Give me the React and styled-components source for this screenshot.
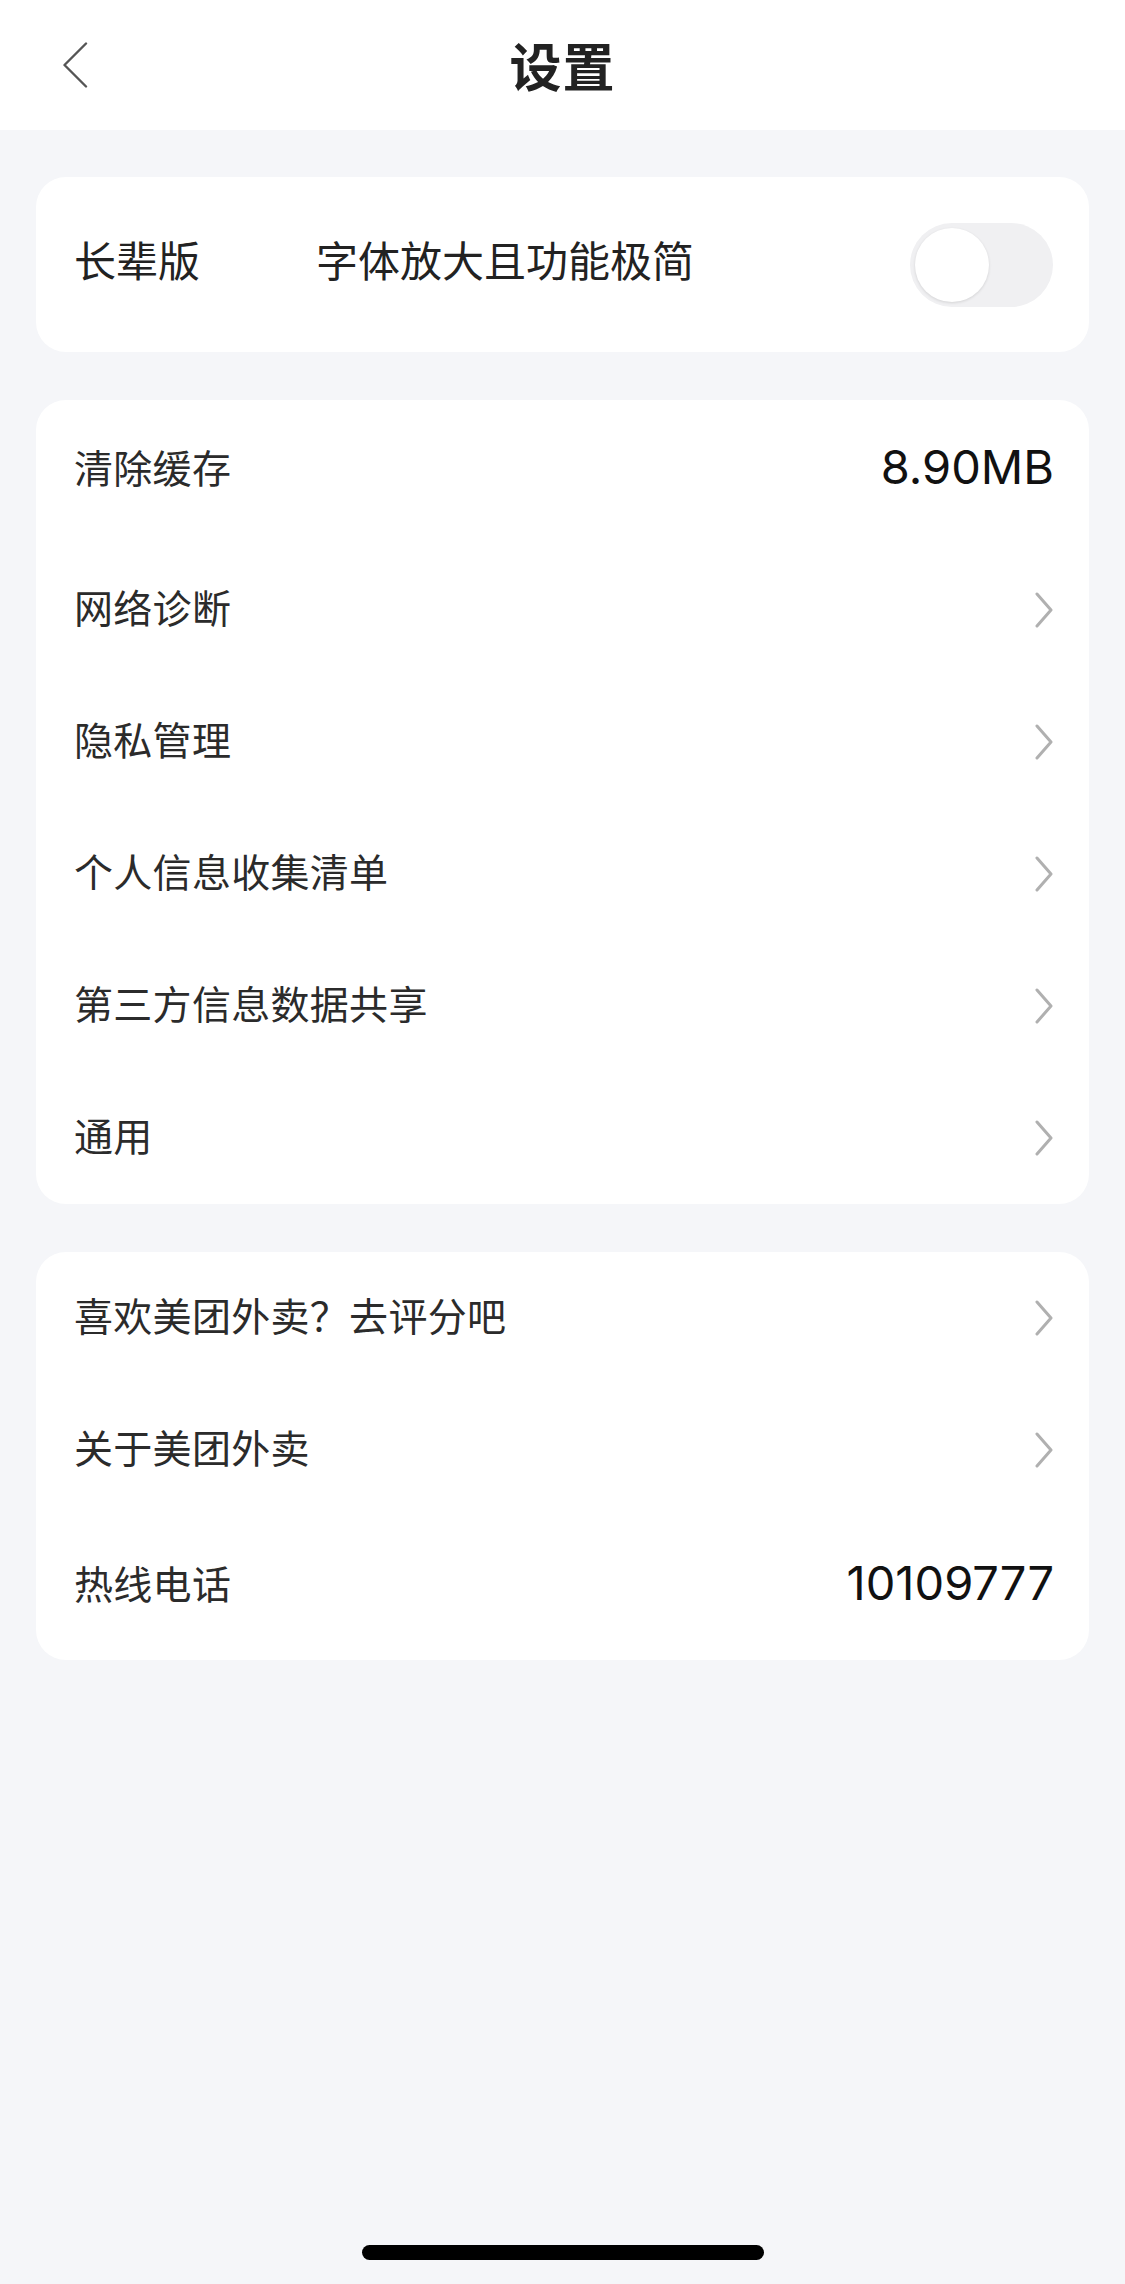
import React from "react";
import styled, { createGlobalStyle } from "styled-components";

const Global = createGlobalStyle`
  html, body { margin: 0; padding: 0; background: #f5f6f9; }
  * { box-sizing: border-box; }
  body { font-family: "Noto Sans CJK SC", "Noto Sans", sans-serif; }
`;

const Page = styled.div`
  min-height: 2284px;
  display: flex;
  flex-direction: column;
  background: #f5f6f9;
`;

const Header = styled.header`
  height: 130px;
  background: #fff;
  display: grid;
  grid-template-columns: 1fr auto 1fr;
  align-items: center;
`;

const BackButton = styled.div`
  padding-left: 62px;
  display: flex;
  align-items: center;
  height: 100%;
`;

const Title = styled.h1`
  margin: 0;
  font-size: 52px;
  font-weight: 700;
  color: #222;
  line-height: 1;
  letter-spacing: 1px;
`;

const Content = styled.main`
  display: flex;
  flex-direction: column;
  gap: 48px;
  padding: 47px 36px 0;
`;

const Card = styled.section`
  background: #fff;
  border-radius: 30px;
  display: flex;
  flex-direction: column;
  overflow: hidden;
`;

const ElderRow = styled.div`
  height: 175px;
  display: flex;
  align-items: center;
  padding: 0 36px 0 38px;
  font-size: 42px;
  color: #222;
`;

const ElderLabel = styled.span`
  width: 242px;
  margin-bottom: 13px;
`;

const ElderDesc = styled.span`
  flex: 1;
  margin-bottom: 13px;
`;

const Toggle = styled.div`
  width: 143px;
  height: 84px;
  border-radius: 42px;
  background: #f0f0f2;
  display: flex;
  align-items: center;
  padding-left: 5px;
`;

const Knob = styled.div`
  width: 74px;
  height: 74px;
  border-radius: 50%;
  background: #fff;
  box-shadow: 0 1px 3px rgba(0, 0, 0, 0.12);
`;

const Row = styled.div`
  height: ${(p) => (p.$tall ? 144 : 132)}px;
  display: flex;
  align-items: center;
  justify-content: space-between;
  padding: 0 35px 0 38px;
  padding-bottom: ${(p) => (p.$tall ? 12 : 9)}px;
`;

const Label = styled.span`
  font-size: 39px;
  color: #2b2b2b;
  letter-spacing: 0.3px;
`;

const Value = styled.span`
  font-family: Inter, "Liberation Sans", sans-serif;
  font-size: 47px;
  color: #111;
`;

const ChevronWrap = styled.span`
  display: flex;
  margin-top: 9px;
`;

const HomeBar = styled.div`
  margin-top: auto;
  display: flex;
  justify-content: center;
  padding-bottom: 24px;
`;

const Indicator = styled.div`
  width: 402px;
  height: 15px;
  border-radius: 8px;
  background: #000;
`;

const Chevron = () => (
  <ChevronWrap>
    <svg width="20" height="36" viewBox="0 0 20 36">
      <path d="M3 2 L17 18 L3 34" fill="none" stroke="#b0b0b0" strokeWidth="3" strokeLinecap="round" strokeLinejoin="round" />
    </svg>
  </ChevronWrap>
);

const BackIcon = () => (
  <svg width="26" height="46" viewBox="0 0 26 46">
    <path d="M24 1.5 L2.5 23 L24 44.5" fill="none" stroke="#555" strokeWidth="2.4" strokeLinecap="round" strokeLinejoin="round" />
  </svg>
);

const group1 = [
  { label: "清除缓存", value: "8.90MB" },
  { label: "网络诊断" },
  { label: "隐私管理" },
  { label: "个人信息收集清单" },
  { label: "第三方信息数据共享" },
  { label: "通用" },
];

const group2 = [
  { label: "喜欢美团外卖？去评分吧" },
  { label: "关于美团外卖" },
  { label: "热线电话", value: "10109777" },
];

const List = ({ items }) => (
  <Card>
    {items.map((it) => (
      <Row key={it.label} $tall={!!it.value}>
        <Label>{it.label}</Label>
        {it.value ? <Value>{it.value}</Value> : <Chevron />}
      </Row>
    ))}
  </Card>
);

export default function App() {
  return (
    <Page>
      <Global />
      <Header>
        <BackButton>
          <BackIcon />
        </BackButton>
        <Title>设置</Title>
        <div />
      </Header>
      <Content>
        <Card>
          <ElderRow>
            <ElderLabel>长辈版</ElderLabel>
            <ElderDesc>字体放大且功能极简</ElderDesc>
            <Toggle>
              <Knob />
            </Toggle>
          </ElderRow>
        </Card>
        <List items={group1} />
        <List items={group2} />
      </Content>
      <HomeBar>
        <Indicator />
      </HomeBar>
    </Page>
  );
}
